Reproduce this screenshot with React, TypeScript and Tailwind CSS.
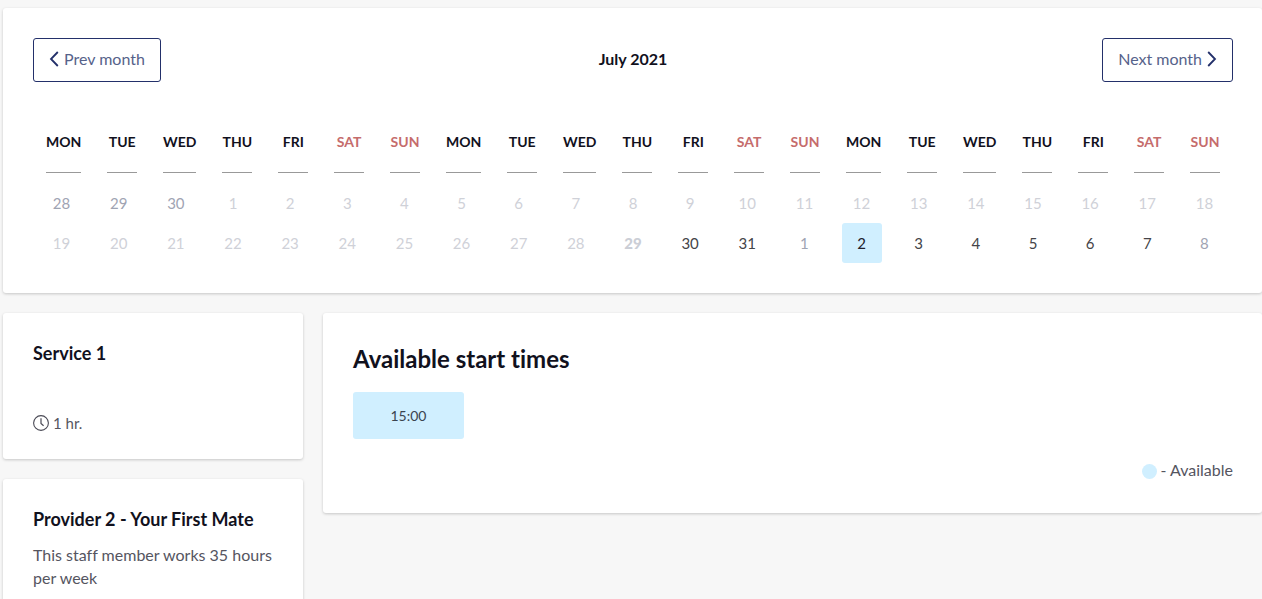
import { clsx } from "clsx"

type DayState = "past" | "other" | "today" | "open" | "selected"

type Day = {
  label: number
  state: DayState
}

const WEEKDAYS = ["MON", "TUE", "WED", "THU", "FRI", "SAT", "SUN"]

const dayRange = (from: number, to: number, state: DayState): Day[] =>
  Array.from({ length: to - from + 1 }, (_, i) => ({ label: from + i, state }))

const DAYS: Day[] = [
  ...dayRange(28, 30, "other"),
  ...dayRange(1, 28, "past"),
  { label: 29, state: "today" },
  ...dayRange(30, 31, "open"),
  { label: 1, state: "other" },
  { label: 2, state: "selected" },
  ...dayRange(3, 7, "open"),
  { label: 8, state: "other" },
]

const DAY_STYLES: Record<DayState, string> = {
  past: "text-[#cfd1d8]",
  other: "text-[#9fa4b3]",
  today: "font-black text-[#cbced6]",
  open: "text-[#444448]",
  selected: "bg-[#d0efff] text-[#22222d]",
}

function Chevron({ direction }: { direction: "left" | "right" }) {
  return (
    <svg viewBox="0 0 10 16" className="h-4 w-2.5" fill="none" stroke="#23306a" strokeWidth="1.8" aria-hidden="true">
      <path d={direction === "left" ? "M8.8 1 2 8l6.8 7" : "M1.2 1 8 8l-6.8 7"} />
    </svg>
  )
}

function ClockIcon() {
  return (
    <svg viewBox="0 0 16 16" className="size-4" fill="none" stroke="#4a4a55" aria-hidden="true">
      <circle cx="8" cy="8" r="7.4" strokeWidth="1.1" />
      <path d="M8 3.2V8.4l2.6 2.4" strokeWidth="1.2" />
    </svg>
  )
}

function Card({ className, children }: { className?: string; children: React.ReactNode }) {
  return (
    <section className={clsx("rounded-[3px] bg-white shadow-[0_1px_3px_rgba(0,0,0,0.2)]", className)}>
      {children}
    </section>
  )
}

function MonthCalendar() {
  return (
    <Card className="py-[30px] pr-[29px] pl-[30px]">
      <div className="grid grid-cols-[1fr_auto_1fr] items-center">
        <button
          type="button"
          className="flex h-11 items-center gap-[5px] justify-self-start rounded-[3px] border border-[#23306a] px-[15px] pb-0.5 text-[#56628a]"
        >
          <Chevron direction="left" />
          Prev month
        </button>
        <h1 className="pb-0.5 text-base font-bold text-[#11111d]">July 2021</h1>
        <button
          type="button"
          className="flex h-11 items-center gap-[5px] justify-self-end rounded-[3px] border border-[#23306a] px-[15px] pb-0.5 text-[#56628a]"
        >
          Next month
          <Chevron direction="right" />
        </button>
      </div>

      <div className="mt-[45px] grid grid-cols-3">
        {[0, 1, 2].map((week) => (
          <div key={week} className="flex justify-around">
            {WEEKDAYS.map((name) => (
              <div
                key={name}
                className={clsx(
                  "flex h-[46px] min-w-[30px] justify-center border-b border-[#999] pt-[5px] text-sm leading-5 font-bold",
                  name.startsWith("S") ? "text-[#c56c6c]" : "text-[#11111d]",
                )}
              >
                {name}
              </div>
            ))}
          </div>
        ))}
      </div>

      <div className="mt-2.5 grid grid-cols-[repeat(21,minmax(0,1fr))] justify-items-center">
        {DAYS.map((day, i) => (
          <button
            key={i}
            type="button"
            disabled={day.state === "past" || day.state === "today"}
            className={clsx("size-10 rounded-[3px] text-[15px]", DAY_STYLES[day.state])}
          >
            {day.label}
          </button>
        ))}
      </div>
    </Card>
  )
}

function ServiceCard() {
  return (
    <Card className="px-[30px] pt-[30px] pb-6">
      <h2 className="text-lg leading-5 font-bold">Service 1</h2>
      <p className="mt-12 flex items-center gap-1 text-[15px] leading-6 text-[#55555f]">
        <ClockIcon />1 hr.
      </p>
    </Card>
  )
}

function ProviderCard() {
  return (
    <Card className="px-[30px] py-[30px]">
      <h2 className="text-lg leading-5 font-bold">Provider 2 - Your First Mate</h2>
      <p className="mt-3.5 text-base leading-[23px] text-[#55555f]">
        This staff member works 35 hours per week
      </p>
    </Card>
  )
}

function StartTimes() {
  return (
    <Card className="flex-1 pt-[30px] pr-[29px] pb-[31px] pl-[30px]">
      <h2 className="text-2xl leading-8 font-bold">Available start times</h2>
      <button
        type="button"
        className="mt-[17px] block h-[47px] w-[111px] rounded-[3px] bg-[#d0efff] text-sm text-[#3a4450]"
      >
        15:00
      </button>
      <p className="mt-[19px] flex items-center justify-end gap-1 text-base leading-6 text-[#55555f]">
        <span className="mt-0.5 size-[15px] rounded-full bg-[#d0efff]" />
        - Available
      </p>
    </Card>
  )
}

export default function App() {
  return (
    <main className="h-screen overflow-hidden bg-[#f7f7f7] pt-2 pl-[3px] font-['Lato',sans-serif] text-[#11111d] [font-variant-ligatures:none]">
      <MonthCalendar />
      <div className="mt-5 flex items-start gap-5">
        <aside className="flex w-[300px] shrink-0 flex-col gap-5">
          <ServiceCard />
          <ProviderCard />
        </aside>
        <StartTimes />
      </div>
    </main>
  )
}
